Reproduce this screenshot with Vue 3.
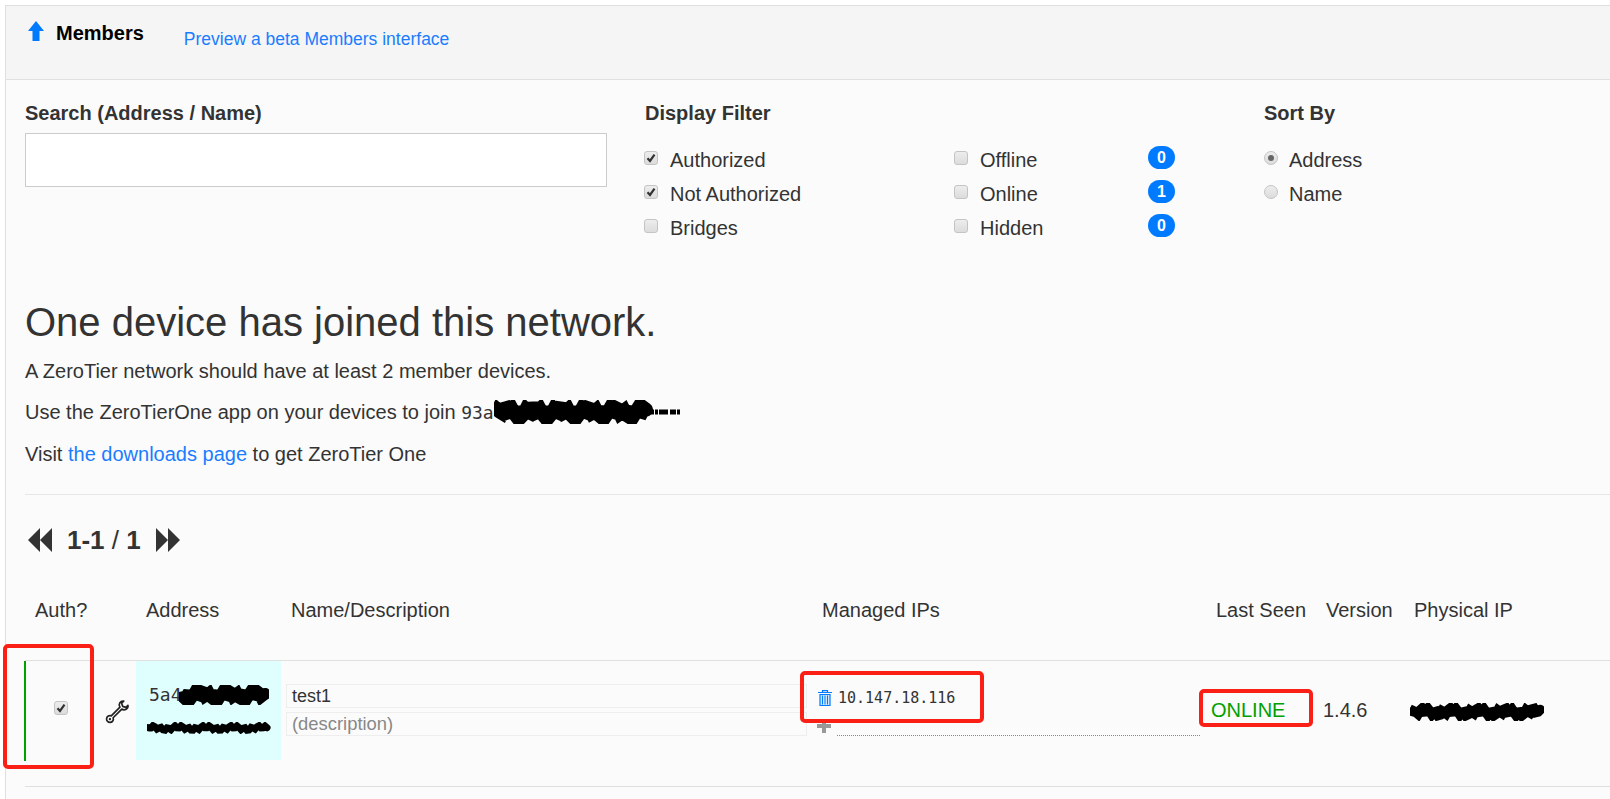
<script setup>
const typeFilters = [
  { label: 'Authorized', on: true },
  { label: 'Offline', on: false },
  { label: 'Not Authorized', on: true },
  { label: 'Online', on: false },
  { label: 'Bridges', on: false },
  { label: 'Hidden', on: false }
]
const counts = [0, 1, 0]

// jagged marker stroke used to hide private values
function scribble(w, h, seed) {
  let d = `M2 ${h / 2}`
  for (let x = 2; x < w - 2; x += 2) {
    const y = h / 2 + Math.sin(x * 0.9 + seed) * h * 0.12 + Math.sin(x * 0.23 + seed * 2) * h * 0.1
    d += ` L${x} ${y.toFixed(1)}`
  }
  return d
}
</script>

<template>
  <div class="page">
    <div class="panel">
      <header class="head">
        <svg class="up" viewBox="0 0 16 20" width="16" height="20">
          <path d="M8 0 16 10H11.500V20H4.500V10H0Z" fill="#007bff" />
        </svg>
        <strong class="head-title">Members</strong>
        <a class="head-link">Preview a beta Members interface</a>
      </header>

      <section class="filters">
        <div>
          <div class="flabel">Search (Address / Name)</div>
          <div class="search"></div>
        </div>
        <div>
          <div class="flabel">Display Filter</div>
          <div class="display">
            <div class="checks">
              <div v-for="f in typeFilters" :key="f.label" class="opt">
                <span class="box">
                  <svg v-if="f.on" viewBox="0 0 14 14" width="14" height="14">
                    <path d="M3.500 7.200 6 10 10.500 3.600" fill="none" stroke="#333" stroke-width="2.200" />
                  </svg>
                </span>
                {{ f.label }}
              </div>
            </div>
            <div class="badges">
              <span v-for="(c, i) in counts" :key="i" class="badge">{{ c }}</span>
            </div>
          </div>
        </div>
        <div>
          <div class="flabel">Sort By</div>
          <div class="sorts">
            <div class="opt"><span class="box round"><i></i></span>Address</div>
            <div class="opt"><span class="box round"></span>Name</div>
          </div>
        </div>
      </section>

      <section class="notice">
        <h1>One device has joined this network.</h1>
        <p>A ZeroTier network should have at least 2 member devices.</p>
        <p>
          Use the ZeroTierOne app on your devices to join <code>93a</code><svg class="redact inline" width="187" height="24" viewBox="0 0 187 24">
            <path :d="scribble(156, 20, 1)" transform="translate(0 2)" fill="none" stroke="#000" stroke-width="14" stroke-linecap="round" />
            <path d="M154 12H187" fill="none" stroke="#000" stroke-width="5" stroke-dasharray="6 1 3 1 9 2" />
          </svg>
        </p>
        <p>Visit <a>the downloads page</a> to get ZeroTier One</p>
      </section>

      <nav class="pager">
        <svg viewBox="0 0 24 24" width="24" height="24"><path d="M12 0V24L0 12ZM24 0V24L12 12Z" fill="#333" /></svg>
        <span class="pager-text"><b>1-1</b> / <b>1</b></span>
        <svg viewBox="0 0 24 24" width="24" height="24"><path d="M0 0V24L12 12ZM12 0V24L24 12Z" fill="#333" /></svg>
      </nav>

      <div class="cols cols-head">
        <span class="pl10">Auth?</span>
        <span class="pl10">Address</span>
        <span class="pl10">Name/Description</span>
        <span class="pl10">Managed IPs</span>
        <span class="pl10">Last Seen</span>
        <span class="pl10">Version</span>
        <span class="pl10">Physical IP</span>
      </div>

      <div class="cols row">
        <div class="c-auth">
          <span class="box">
            <svg viewBox="0 0 14 14" width="14" height="14">
              <path d="M3.500 7.200 6 10 10.500 3.600" fill="none" stroke="#333" stroke-width="2.200" />
            </svg>
          </span>
          <svg class="wrench" viewBox="0 0 24 24" width="24" height="24">
            <g transform="rotate(45 12 12)">
              <path d="M10.700 6.500V18.800A3.400 3.400 0 1 0 13.300 18.800V6.500A3.900 3.900 0 0 0 15 -.5V2.500L12 4 9 2.500V-.5A3.900 3.900 0 0 0 10.700 6.500Z" fill="#fff" stroke="#222" stroke-width="1.700" stroke-linejoin="round" />
              <circle cx="12" cy="22" r="1.200" fill="#222" />
            </g>
          </svg>
        </div>
        <div class="c-addr">
          <div class="addr-line">
            <code>5a4</code>
            <svg class="redact" width="90" height="20" viewBox="0 0 90 20">
              <path :d="scribble(90, 20, 3)" fill="none" stroke="#000" stroke-width="12" stroke-linecap="round" />
            </svg>
          </div>
          <svg class="redact" width="124" height="12" viewBox="0 0 124 12">
            <path :d="scribble(124, 12, 5)" fill="none" stroke="#000" stroke-width="7" stroke-linecap="round" />
          </svg>
        </div>
        <div class="c-name">
          <div class="field">test1</div>
          <div class="field muted">(description)</div>
        </div>
        <div class="c-ips">
          <div class="ip">
            <svg class="trash" viewBox="0 0 14 16" width="14" height="16">
              <path d="M0 2.500H14M4.500 2.500V.7H9.500V2.500" fill="none" stroke="#007bff" stroke-width="1.200" />
              <path d="M2 4.500H12V15.500H2Z" fill="#cfe4ff" stroke="#007bff" stroke-width="1.200" />
              <path d="M4.500 5.500V14.500M7 5.500V14.500M9.500 5.500V14.500" stroke="#007bff" stroke-width="1" />
            </svg>
            <code>10.147.18.116</code>
          </div>
          <div class="ip-add">
            <svg viewBox="0 0 14 14" width="14" height="14">
              <path d="M5 0H9V5H14V9H9V14H5V9H0V5H5Z" fill="#999" />
            </svg>
            <span class="ip-input"></span>
          </div>
        </div>
        <div class="c-seen">ONLINE</div>
        <div class="c-ver">1.4.6</div>
        <div class="c-phys">
          <svg class="redact" width="134" height="18" viewBox="0 0 134 18">
            <path :d="scribble(134, 18, 7)" fill="none" stroke="#000" stroke-width="10" stroke-linecap="round" />
          </svg>
        </div>
      </div>
    </div>

    <span class="mark mark-auth"></span>
    <span class="mark mark-ip"></span>
    <span class="mark mark-seen"></span>
  </div>
</template>

<style>
body {
  margin: 0;
  background: #fff;
}
</style>

<style scoped>
.page {
  position: relative;
  width: 1610px;
  height: 799px;
  overflow: hidden;
  background: #fff;
  font-family: "Liberation Sans", Arial, sans-serif;
  font-size: 20px;
  line-height: 20px;
  color: #333;
}

.panel {
  margin: 5px 0 0 5px;
  height: 794px;
  box-sizing: border-box;
  background: #fbfbfb;
  border-top: 1px solid #e0e0e0;
  border-left: 1px solid #e0e0e0;
}

.head {
  height: 74px;
  box-sizing: border-box;
  display: flex;
  align-items: flex-start;
  background: #f5f5f5;
  border-bottom: 1px solid #e0e0e0;
  padding: 15px 0 0 22px;
}

.up {
  flex: none;
}

.head-title {
  margin: 2px 0 0 12px;
  font-size: 20px;
  color: #000;
}

.head-link {
  margin: 8px 0 0 40px;
  font-size: 17.500px;
  color: #1a7dff;
}

.filters {
  display: grid;
  grid-template-columns: 620px 619px 1fr;
  padding: 23px 0 0 19px;
  height: 220px;
  box-sizing: border-box;
}

.flabel {
  font-weight: bold;
}

.search {
  width: 582px;
  height: 54px;
  box-sizing: border-box;
  margin-top: 10px;
  background: #fff;
  border: 1px solid #ccc;
}

.display {
  display: flex;
  margin-top: 20px;
}

.checks {
  display: grid;
  grid-template-columns: 310px 193px;
  grid-auto-rows: 34px;
}

.checks .box {
  margin-left: -1px;
  margin-right: 12px;
}

.badges {
  display: flex;
  flex-direction: column;
  gap: 11px;
  margin-top: 3px;
}

.badge {
  width: 27px;
  height: 23px;
  border-radius: 12px;
  background: #007bff;
  color: #fff;
  font-size: 16px;
  font-weight: bold;
  line-height: 23px;
  text-align: center;
}

.sorts {
  margin-top: 20px;
}

.opt {
  display: flex;
  align-items: center;
  height: 34px;
}

.box {
  flex: none;
  position: relative;
  display: inline-block;
  width: 12px;
  height: 12px;
  margin-right: 11px;
  margin-top: -4px;
  border: 1px solid #c4c4c4;
  border-radius: 3px;
  background: linear-gradient(#ededed, #dcdcdc);
}

.box svg {
  position: absolute;
  left: -1px;
  top: -1px;
}

.box.round {
  border-radius: 50%;
}

.box.round i {
  position: absolute;
  left: 3px;
  top: 3px;
  width: 6px;
  height: 6px;
  border-radius: 50%;
  background: #666;
}

.notice {
  padding: 0 0 0 19px;
}

h1 {
  margin: 0;
  font-size: 40px;
  font-weight: normal;
  line-height: 44px;
}

p {
  margin: 17px 0 0;
  height: 24px;
  line-height: 24px;
}

h1 + p {
  margin-top: 15px;
}

p:last-child {
  margin-top: 18px;
}

p a {
  color: #1a7dff;
}

code {
  font-family: "DejaVu Sans Mono", monospace;
  font-size: 18px;
}

.redact {
  display: block;
}

.redact.inline {
  display: inline-block;
  vertical-align: middle;
  margin: -4px 0 0 0;
}

.pager {
  display: flex;
  align-items: center;
  gap: 15px;
  margin: 28px 0 0 19px;
  padding: 33px 0 0 3px;
  height: 24px;
  border-top: 1px solid #e6e6e6;
}

.pager-text {
  font-size: 26px;
}

.cols {
  display: grid;
  grid-template-columns: 111px 145px 531px 394px 110px 88px 1fr;
  margin-left: 19px;
}

.cols-head {
  margin-top: 47px;
  line-height: 22px;
  height: 61px;
}

.pl10 {
  padding-left: 10px;
}

.row {
  height: 127px;
  box-sizing: border-box;
  border-top: 1px solid #e0e0e0;
  border-bottom: 1px solid #e0e0e0;
  align-items: start;
}

.c-auth {
  display: flex;
  align-items: center;
  height: 100px;
  margin-left: -1px;
  padding-left: 28px;
  border-left: 2px solid #00a000;
}

.c-auth .box {
  margin: 0 0 6px 0;
}

.wrench {
  margin-left: 37px;
  margin-top: 2px;
  overflow: visible;
}

.c-addr {
  height: 99px;
  box-sizing: border-box;
  padding: 22px 0 0 13px;
  background: #dfffff;
}

.addr-line {
  display: flex;
  align-items: center;
  height: 24px;
  margin-bottom: 15px;
}

.addr-line .redact {
  margin-left: -3px;
}

.c-addr > .redact {
  margin-left: -2px;
}

.c-name {
  padding: 23px 5px 0;
  display: flex;
  flex-direction: column;
  gap: 4px;
  font-size: 18px;
}

.field {
  height: 24px;
  box-sizing: border-box;
  padding-left: 5px;
  border: 1px solid #eee;
  line-height: 22px;
}

.muted {
  color: #888;
  font-size: 18.400px;
}

.c-ips {
  padding: 27px 0 0 6px;
}

.ip {
  display: flex;
  align-items: center;
  gap: 6px;
  height: 20px;
}

.ip code {
  font-size: 15px;
}

.ip-add {
  display: flex;
  align-items: flex-end;
  gap: 6px;
  margin-top: 10px;
  height: 18px;
}

.ip-add svg {
  margin-bottom: 3px;
  margin-left: -1px;
}

.ip-input {
  flex: 1;
  border-bottom: 1px dotted #888;
  margin-right: 6px;
}

.c-seen {
  padding: 39px 0 0 5px;
  color: #00a000;
}

.c-ver {
  padding: 39px 0 0 7px;
}

.c-phys {
  padding: 42px 0 0 6px;
}

.mark {
  position: absolute;
  box-sizing: border-box;
  border: 4px solid #fb2016;
  border-radius: 5px;
}

.mark-auth {
  left: 3px;
  top: 644px;
  width: 91px;
  height: 125px;
}

.mark-ip {
  left: 800px;
  top: 671px;
  width: 184px;
  height: 52px;
}

.mark-seen {
  left: 1199px;
  top: 689px;
  width: 114px;
  height: 38px;
}
</style>
